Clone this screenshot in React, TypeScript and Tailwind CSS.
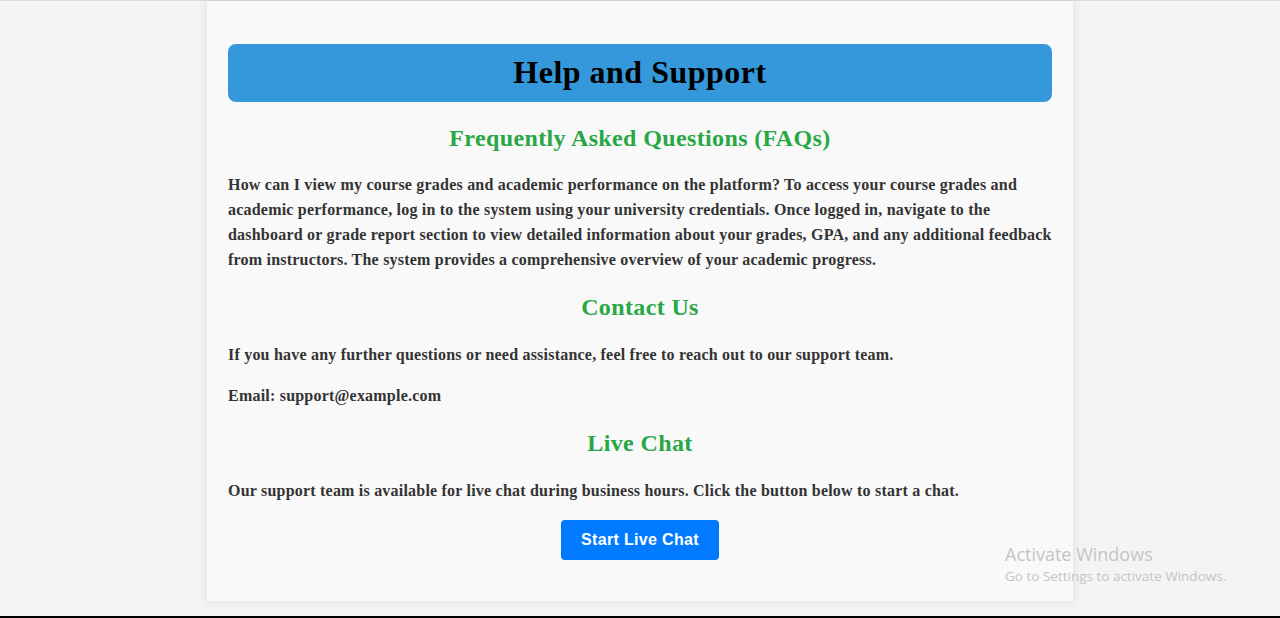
export default function App() {
  return (
    <div className="relative flex min-h-[618px] flex-col bg-[#f4f4f4] border-t border-[#dcdcdc]">
      <div className="flex flex-1 justify-center">
        <div
          className="w-[866px] self-start bg-[#f9f9f9] px-[21px] pt-[43px] pb-[41px] shadow-[0_0_10px_rgba(0,0,0,0.1)]"
          style={{ fontFamily: '"Liberation Serif", "Times New Roman", serif' }}
        >
          <header className="flex h-[58px] items-center justify-center rounded-[8px] bg-[#3498db] pb-[3px]">
            <h1 className="text-[32px] font-bold tracking-[0.5px] text-black">Help and Support</h1>
          </header>

          <h2 className="mt-[22px] text-center text-[24px] leading-[28px] font-bold tracking-[0.37px] text-[#28a745]">
            Frequently Asked Questions (FAQs)
          </h2>
          <p className="mt-[20px] text-[16px] leading-[25px] font-bold tracking-[0.21px] text-[#333]">
            How can I view my course grades and academic performance on the platform? To access your course grades and
            academic performance, log in to the system using your university credentials. Once logged in, navigate to the
            dashboard or grade report section to view detailed information about your grades, GPA, and any additional
            feedback from instructors. The system provides a comprehensive overview of your academic progress.
          </p>

          <h2 className="mt-[21px] text-center text-[24px] leading-[28px] font-bold tracking-[0.37px] text-[#28a745]">
            Contact Us
          </h2>
          <p className="mt-[21px] text-[16px] leading-[25px] font-bold tracking-[0.21px] text-[#333]">
            If you have any further questions or need assistance, feel free to reach out to our support team.
          </p>
          <p className="mt-[16px] text-[16px] leading-[25px] font-bold tracking-[0.21px] text-[#333]">
            Email: support@example.com
          </p>

          <h2 className="mt-[21px] text-center text-[24px] leading-[28px] font-bold tracking-[0.37px] text-[#28a745]">
            Live Chat
          </h2>
          <p className="mt-[21px] text-[16px] leading-[25px] font-bold tracking-[0.21px] text-[#333]">
            Our support team is available for live chat during business hours. Click the button below to start a chat.
          </p>
          <div className="mt-[17px] flex justify-center">
            <button
              className="h-[40px] rounded-[4px] bg-[#007bff] px-[20px] text-[16px] font-bold tracking-[0.33px] text-white"
              style={{ fontFamily: '"Liberation Sans", Arial, sans-serif' }}
            >
              Start Live Chat
            </button>
          </div>
        </div>
      </div>
      <div className="h-[2px] bg-black" />

      {/* windows watermark */}
      <div
        className="pointer-events-none absolute left-[1005px] top-[542px] text-[#c4c4c4]"
        style={{ fontFamily: '"Open Sans", "Noto Sans", sans-serif' }}
      >
        <div className="text-[18px] leading-[23px]">Activate Windows</div>
        <div className="text-[13.5px] leading-[20px]">Go to Settings to activate Windows.</div>
      </div>
    </div>
  );
}
